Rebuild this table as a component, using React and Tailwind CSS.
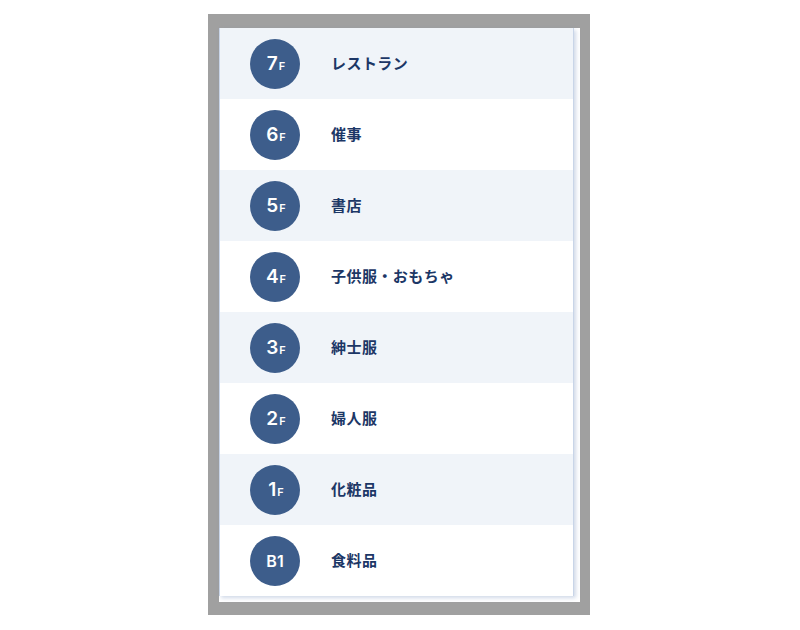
import React from "react";

const floors = [
  { num: "7", unit: "F", name: "レストラン" },
  { num: "6", unit: "F", name: "催事" },
  { num: "5", unit: "F", name: "書店" },
  { num: "4", unit: "F", name: "子供服・おもちゃ" },
  { num: "3", unit: "F", name: "紳士服" },
  { num: "2", unit: "F", name: "婦人服" },
  { num: "1", unit: "F", name: "化粧品" },
  { num: "B1", unit: "", name: "食料品" },
];

export default function App() {
  return (
    <div
      className="w-[800px] h-[630px] bg-white pt-[14px] pl-[208px]"
      style={{ fontFamily: '"Noto Sans", "Noto Sans CJK JP", sans-serif' }}
    >
      <div className="w-[382px] h-[601px] bg-[#a0a0a0] pt-[14px] pl-[11px]">
        <div className="w-[361px] h-[574px] bg-white">
          <div className="w-[355px] h-[568px] bg-white border-l border-r border-b border-[#c9d5e8] shadow-[2px_2px_4px_rgba(120,145,190,0.35)]">
            {floors.map((f, i) => (
              <div
                key={i}
                className={`flex items-center h-[71px] pl-[30px] ${i % 2 === 0 ? "bg-[#f0f4f9]" : "bg-white"}`}
              >
                <div
                  className="w-[50px] h-[50px] rounded-full bg-[#3d5d8b] flex items-center justify-center text-white font-semibold"
                  style={{ fontFamily: 'Inter, "Noto Sans", sans-serif' }}
                >
                  {f.unit ? (
                    <span className="flex items-baseline pl-[2px]">
                      <span className="text-[19px] leading-none">{f.num}</span>
                      <span className="text-[11px] leading-none ml-[1px]">{f.unit}</span>
                    </span>
                  ) : (
                    <span className="text-[16px] leading-none">{f.num}</span>
                  )}
                </div>
                <div className="ml-[31px] text-[15px] tracking-[0.03em] font-bold text-[#1c3766]">{f.name}</div>
              </div>
            ))}
          </div>
        </div>
      </div>
    </div>
  );
}
